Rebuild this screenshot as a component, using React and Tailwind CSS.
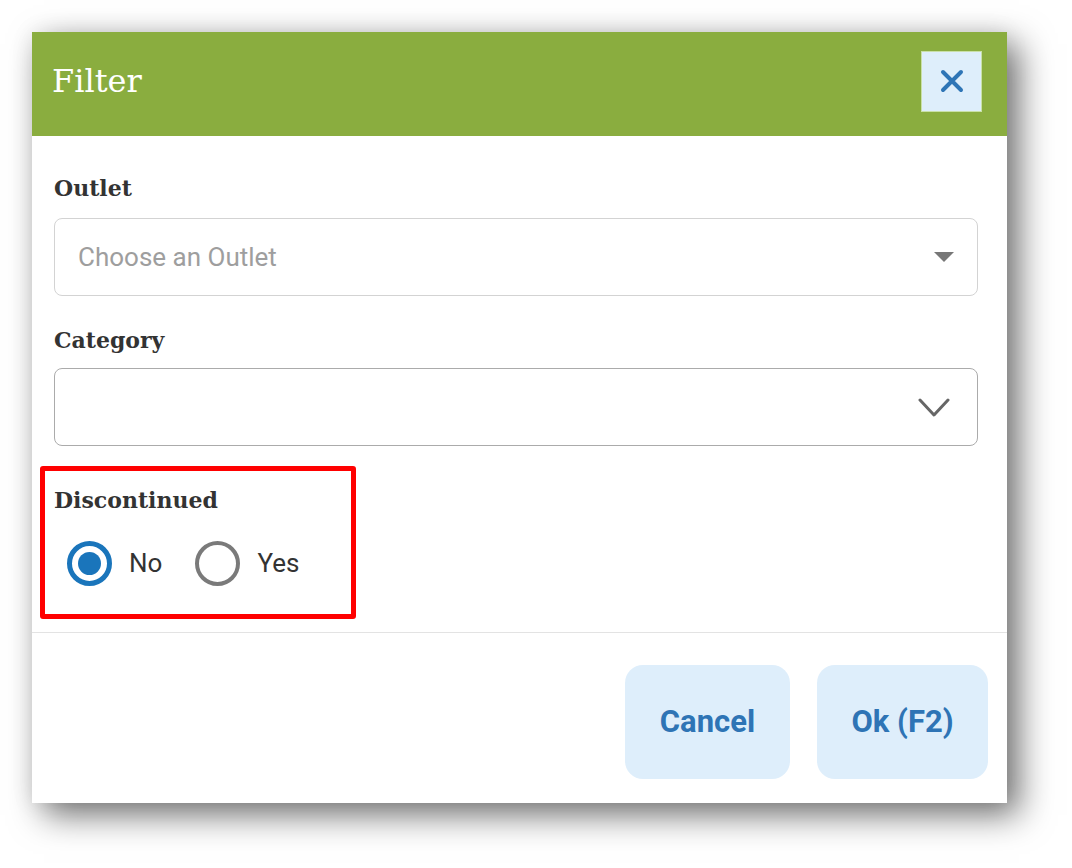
import React, { useState } from 'react';

const slab = { fontFamily: '"DejaVu Serif", "Liberation Serif", serif' };
const roboto = { fontFamily: 'Roboto, "Liberation Sans", sans-serif' };

const Radio = ({ checked, label, onClick }) => (
  <button type="button" onClick={onClick} className="flex items-center">
    {checked ? (
      <span className="flex h-[45px] w-[45px] items-center justify-center rounded-full border-[5px] border-[#1a75bb]">
        <span className="h-[23px] w-[23px] rounded-full bg-[#1a75bb]" />
      </span>
    ) : (
      <span className="h-[45px] w-[45px] rounded-full border-[4px] border-[#7a7a7a]" />
    )}
    <span className="ml-[17px] text-[26px] text-[#333]" style={roboto}>{label}</span>
  </button>
);

export default function App() {
  const [discontinued, setDiscontinued] = useState('no');

  return (
    <div className="min-h-screen w-full bg-white pl-[32px] pt-[32px]">
      <div className="flex h-[771px] w-[975px] flex-col bg-white shadow-[12px_12px_32px_rgba(0,0,0,0.55),0_0_22px_rgba(0,0,0,0.08)]">
        {/* header */}
        <div className="flex h-[104px] items-center justify-between bg-[#8aad3f] pb-[6px] pl-[20px] pr-[25px]">
          <h1 className="text-[32px] text-white" style={slab}>Filter</h1>
          <button type="button" className="flex h-[61px] w-[61px] items-center justify-center border border-[#c9e0a8] bg-[#deeefb]">
            <svg width="24" height="24" viewBox="0 0 24 24" fill="none" stroke="#2e75b6" strokeWidth="4" strokeLinecap="round">
              <path d="M3 3l18 18M21 3L3 21" />
            </svg>
          </button>
        </div>

        {/* body */}
        <div className="flex-1 pl-[22px] pr-[29px] pt-[37px]">
          <label className="block h-[30px] text-[22px] font-bold leading-[30px] text-[#333]" style={slab}>Outlet</label>
          <div className="mt-[15px] flex h-[78px] items-center justify-between rounded-[8px] border border-[#d3d3d3] pl-[23px] pr-[23px]">
            <span className="text-[26px] text-[#9e9e9e]" style={roboto}>Choose an Outlet</span>
            <svg width="20" height="10" viewBox="0 0 20 10">
              <path d="M0 0h20L10 10z" fill="#777" />
            </svg>
          </div>

          <label className="mt-[29px] block h-[30px] text-[22px] font-bold leading-[30px] text-[#333]" style={slab}>Category</label>
          <div className="mt-[13px] flex h-[78px] items-center justify-end rounded-[8px] border border-[#ababab] pr-[27px]">
            <svg width="32" height="19" viewBox="0 0 32 19" fill="none" stroke="#666" strokeWidth="3" strokeLinecap="round" strokeLinejoin="round">
              <path d="M2 2l14 15L30 2" />
            </svg>
          </div>

          <div className="-ml-[14px] mt-[20px] h-[153px] w-[316px] rounded-[3px] border-[5px] border-[#ff0000] pl-[9px] pt-[14px]">
            <label className="block h-[30px] text-[22px] font-bold leading-[30px] text-[#333]" style={slab}>Discontinued</label>
            <div className="mt-[26px] flex items-center gap-[33px] pl-[13px]">
              <Radio checked={discontinued === 'no'} label="No" onClick={() => setDiscontinued('no')} />
              <Radio checked={discontinued === 'yes'} label="Yes" onClick={() => setDiscontinued('yes')} />
            </div>
          </div>
        </div>

        {/* footer */}
        <div className="flex justify-end gap-[27px] border-t border-[#e3e3e3] pb-[24px] pr-[19px] pt-[32px]">
          <button type="button" className="h-[114px] w-[165px] rounded-[18px] bg-[#deeefb] text-[31px] font-bold text-[#2e74b5]" style={roboto}>
            Cancel
          </button>
          <button type="button" className="h-[114px] w-[171px] rounded-[18px] bg-[#deeefb] text-[31px] font-bold text-[#2e74b5]" style={roboto}>
            Ok (F2)
          </button>
        </div>
      </div>
    </div>
  );
}
